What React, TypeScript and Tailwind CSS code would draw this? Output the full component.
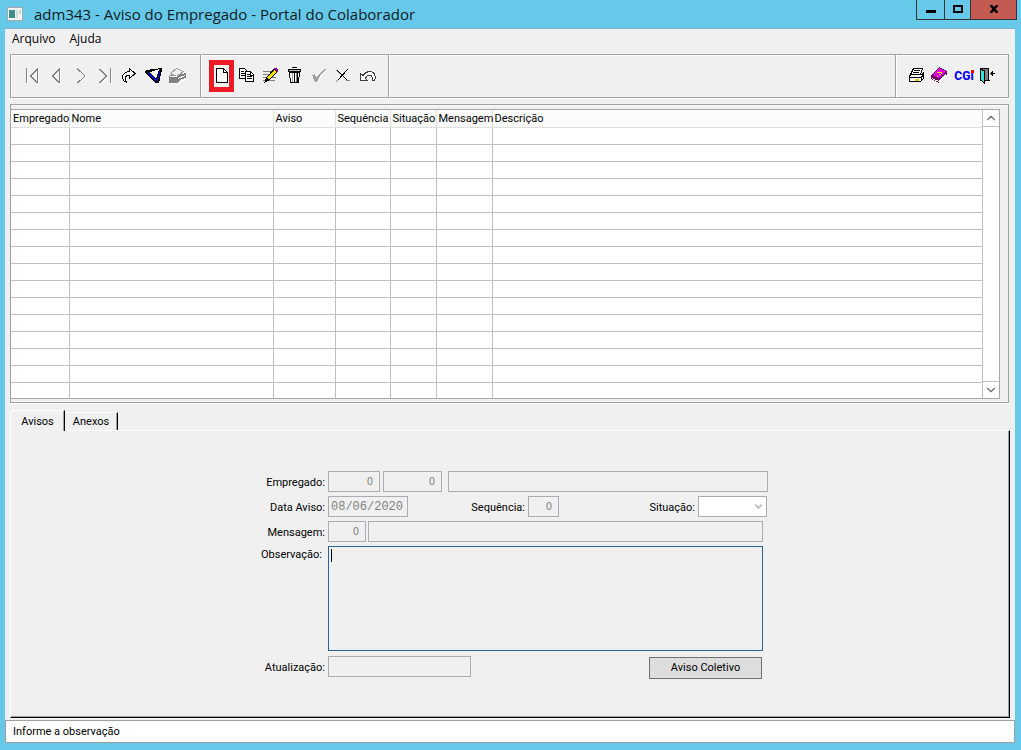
import React, { useState } from 'react';
import { ChevronDown, ChevronUp } from 'lucide-react';

interface Column {
    label: string;
    width: string;
}

const columns: Column[] = [
    { label: 'Empregado', width: 'w-[58px]' },
    { label: 'Nome', width: 'w-[204px]' },
    { label: 'Aviso', width: 'w-[62px]' },
    { label: 'Sequência', width: 'w-[55px]' },
    { label: 'Situação', width: 'w-[46px]' },
    { label: 'Mensagem', width: 'w-[56px]' },
    { label: 'Descrição', width: 'w-auto' },
];

const EMPTY_ROWS = 16;

interface ToolButtonProps {
    title: string;
    children: React.ReactNode;
}

const ToolButton: React.FC<ToolButtonProps> = ({ title, children }) => (
    <button type="button" title={title} aria-label={title} className="flex h-6 w-6 shrink-0 items-center justify-center">
        <svg viewBox="0 0 24 24" width="24" height="24" fill="none" shapeRendering="crispEdges">
            {children}
        </svg>
    </button>
);

const groupClass =
    'flex items-center border border-[#a0a0a0] border-l-white shadow-[inset_0_1px_0_#fff,0_1px_0_#fff]';

const Toolbar: React.FC = () => (
    <div className="mr-[6px] ml-[5px] flex h-11 border-l border-[#a0a0a0]">
        <div className={`${groupClass} w-[190px] shrink-0 pl-2`}>
            <ToolButton title="Primeiro">
                <path d="M7.5 5v15M11.5 12.5l6 6.5M18.5 5v15" stroke="#fff" />
                <path d="M6.5 4v15M17.5 4v15M17.5 5l-7 7 7 7" stroke="#808080" />
            </ToolButton>
            <ToolButton title="Anterior">
                <path d="M16.5 5v15" stroke="#fff" />
                <path d="M15.5 4v15M15.5 5l-7 7 7 7" stroke="#808080" />
            </ToolButton>
            <ToolButton title="Próximo">
                <path d="M10.5 20v-1l7-7" stroke="#fff" />
                <path d="M9.5 4v1l7.500 7-7.500 7" stroke="#808080" />
            </ToolButton>
            <ToolButton title="Último">
                <path d="M19.5 5v15M8.500 20l7-7" stroke="#fff" />
                <path d="M7.5 5l7 7-7 7M18.5 4v15" stroke="#808080" />
            </ToolButton>
            <ToolButton title="Ir para">
                <path
                    d="M13.5 4.500l5.500 5-5.500 5v-3C10 11 8 13 10.500 18.500 5 16 4.500 9 13.500 7.500z"
                    fill="#fff"
                    stroke="#000"
                />
            </ToolButton>
            <ToolButton title="Filtrar">
                <path d="M5 8l1-2 16-2v2l-3 13h-4z" fill="#000" />
                <path d="M8 9h2l6 7v2z" fill="#0000ff" />
                <path d="M10 8l9-3-3 10z" fill="#fff" />
                <path d="M19 7h1l-2 10h-1z" fill="#0000ff" />
            </ToolButton>
            <ToolButton title="Limpar filtro">
                <path d="M5 12l5-3 3 2 9-2v5l-5 1-3 4H5z" fill="#808080" />
                <path d="M6.500 9.500l6-5 7 3-7 5z" fill="#f0f0f0" stroke="#a0a0a0" />
                <path d="M6 12.500h7M14 14.500l7-3M6 19.500h8l4-3 4-1" stroke="#fff" />
            </ToolButton>
        </div>
        <div className={`${groupClass} w-[188px] shrink-0 pl-[7px]`}>
            <button
                type="button"
                title="Novo"
                aria-label="Novo"
                className="h-8 w-[25px] shrink-0 border-[5px] border-[#ed1c24]"
            >
                <svg viewBox="0 0 15 22" width="15" height="22" fill="none" shapeRendering="crispEdges">
                    <path d="M2.500 3.500h7l4 4v10h-11z" fill="#fff" stroke="#000" />
                    <path d="M9.500 3.500v4h4" stroke="#000" />
                </svg>
            </button>
            <ToolButton title="Copiar">
                <path d="M5.500 4.500h5l3 3v7h-8z" fill="#fff" stroke="#000" />
                <path d="M7 7.500h3M7 9.500h4M7 11.500h4" stroke="#000" />
                <path d="M11.500 7.500h5l3 3v7h-8z" fill="#fff" stroke="#000" />
                <path d="M13 10.500h3M13 12.500h5M13 14.500h5M16.500 8v3h3" stroke="#000" />
            </ToolButton>
            <ToolButton title="Alterar">
                <path d="M5 7.500h9M5 10.500h7M5 13.500h5M13 13.500h5M5 16.500h12" stroke="#808080" />
                <path d="M6 19l2-5 8-10h3l1 3-8 9z" fill="#000" />
                <path d="M9 14l7-8 2 2-7 8z" fill="#f0e000" />
                <path d="M16 4h3v1h1v3h-2l-2-2z" fill="#800080" />
            </ToolButton>
            <ToolButton title="Excluir">
                <path d="M10 3.500h5" stroke="#000" />
                <path d="M6.500 5.500h12v2h-12z" fill="#c0c0c0" stroke="#000" />
                <path d="M7.500 8.500h10l-1 10h-8z" fill="#fff" stroke="#000" />
                <path d="M10.500 9v9" stroke="#a0a0a0" />
                <path d="M12.500 9v9M15.500 9v9" stroke="#000" />
                <path d="M14.500 9v9" stroke="#808080" />
            </ToolButton>
            <ToolButton title="Confirmar">
                <path d="M7 13l3 5 2 1 1-3 8-10-8 7-2 3-2-4z" fill="#fff" />
                <path d="M6 11l3-1 1 4 5-6 4-3h1l-6 7-3 6H9z" fill="#a0a0a0" />
            </ToolButton>
            <ToolButton title="Cancelar">
                <path d="M7 6l11 11M18 5L7 17" stroke="#000" />
                <path d="M6 6l4 4M16 16l4 1M6 18l2-2" stroke="#808080" />
            </ToolButton>
            <ToolButton title="Desfazer">
                <path
                    d="M6.500 9.500v7h7l-2-2c1-4 6-4 7-1v3h2c2-4 0-9-5-9-4 0-5 2-6.500 4z"
                    fill="#fff"
                    stroke="#404040"
                />
            </ToolButton>
        </div>
        <div className={`${groupClass} min-w-0 flex-1`} />
        <div className={`${groupClass} w-[113px] shrink-0 pl-[7px]`}>
            <ToolButton title="Imprimir">
                <path d="M9.500 4.500h9l-2 6h-10z" fill="#fff" stroke="#000" />
                <path d="M10 6.500h6M9 8.500h6" stroke="#000" />
                <path d="M5.500 11.500l2-1h11l1-2v6l-3 3h-11z" fill="#fff" stroke="#000" />
                <path d="M5 13.500h12l2-2M17.500 13v4" stroke="#000" />
                <path d="M11 15.500h4" stroke="#e0d000" strokeWidth="2" />
            </ToolButton>
            <ToolButton title="Ajuda">
                <path d="M3 12l8-9 8 4v3l-8 9-8-4z" fill="#700070" />
                <path d="M5 11l6-7 7 3-7 7z" fill="#e000e0" />
                <path d="M4 14l7 3 7-8v2l-7 7-7-3z" fill="#fff" />
                <path d="M9 8.500h4M13.500 8v2M11 10.500h2M9 12.500h1" stroke="#ffe000" />
            </ToolButton>
            <button
                type="button"
                className="relative flex h-6 w-6 shrink-0 items-center justify-center text-[12px] leading-6 font-extrabold text-[#0000ff]"
            >
                CGi
                <span className="absolute top-[6px] right-[2px] h-[3px] w-[3px] bg-[#ff0000]" />
            </button>
            <ToolButton title="Sair">
                <path d="M4 4.500h9M12.500 4v12M4.500 4v12M4 16.500h10" stroke="#000" />
                <path d="M7 5h5v11H7z" fill="#808080" />
                <path d="M4.500 5l4 2v12l-4-3z" fill="#30e0e0" stroke="#000" />
                <path d="M14 9.500h5M15.500 8v3M16.500 7v5" stroke="#000" />
            </ToolButton>
        </div>
    </div>
);

const AvisosGrid: React.FC = () => (
    <div className="mt-1.5 mr-[6px] ml-[5px] border border-[#a0a0a0] bg-[#f0f0f0] pt-1 pb-[3px] shadow-[inset_0_1px_0_#fff,0_1px_0_#fff]">
        <div className="mr-2 flex h-[290px] overflow-hidden border border-l-0 border-[#a8a8ac] bg-white">
            <table className="w-full flex-1 table-fixed border-collapse self-start">
                <thead>
                    <tr className="h-[17px]">
                        {columns.map((column) => (
                            <th
                                key={column.label}
                                className={`${column.width} h-[17px] border-r border-b border-[#e0e0e0] bg-[#fcfcfc] p-0 pt-0.5 pl-0.5 text-left leading-[14px] font-normal whitespace-nowrap last:border-r-0`}
                            >
                                {column.label}
                            </th>
                        ))}
                    </tr>
                </thead>
                <tbody>
                    {Array.from({ length: EMPTY_ROWS }, (_, row) => (
                        <tr key={row} className="h-[17px]">
                            {columns.map((column) => (
                                <td
                                    key={column.label}
                                    className="h-[17px] border-r border-b border-[#c0c0c0] p-0 last:border-r-0"
                                />
                            ))}
                        </tr>
                    ))}
                </tbody>
            </table>
            <div className="flex w-[17px] shrink-0 flex-col justify-between border-l border-[#c0c0c0] text-[#707070]">
                <button type="button" aria-label="Rolar para cima" className="flex h-[17px] items-center justify-center border-b border-[#c0c0c0]">
                    <ChevronUp size={14} />
                </button>
                <button type="button" aria-label="Rolar para baixo" className="flex h-[17px] items-center justify-center border-t border-[#c0c0c0]">
                    <ChevronDown size={14} />
                </button>
            </div>
        </div>
    </div>
);

const fieldClass =
    'h-[21px] shrink-0 border border-[#abadb3] bg-[#f0f0f0] text-[#808080] outline-none';
const numberClass = "pr-1.5 text-right font-['DejaVu_Sans',sans-serif] text-[10px]";
const labelClass = 'mr-[3px] pt-0.5 text-right';

const AvisoForm: React.FC = () => {
    const [observacao, setObservacao] = useState('');

    return (
        <form className="mx-auto flex w-[516px] flex-col gap-1 pt-10" onSubmit={(e) => e.preventDefault()}>
            <div className="flex items-center">
                <label htmlFor="empregado" className={`${labelClass} w-[73px]`}>
                    Empregado:
                </label>
                <input id="empregado" readOnly value="0" className={`${fieldClass} ${numberClass} mr-[3px] w-[52px]`} />
                <input aria-label="Contrato" readOnly value="0" className={`${fieldClass} ${numberClass} mr-1.5 w-[59px]`} />
                <input aria-label="Nome do empregado" readOnly className={`${fieldClass} w-[320px]`} />
            </div>
            <div className="flex items-center">
                <label htmlFor="data" className={`${labelClass} w-[73px]`}>
                    Data Aviso:
                </label>
                <input
                    id="data"
                    readOnly
                    value="08/06/2020"
                    className={`${fieldClass} w-20 pl-0.5 font-['Liberation_Mono',monospace] text-[12px]`}
                />
                <label htmlFor="sequencia" className={`${labelClass} w-[117px]`}>
                    Sequência:
                </label>
                <input id="sequencia" readOnly value="0" className={`${fieldClass} ${numberClass} w-[31px]`} />
                <label htmlFor="situacao" className={`${labelClass} w-[136px]`}>
                    Situação:
                </label>
                <div className="relative h-[21px] w-[69px]">
                    <select id="situacao" className="block h-[21px] w-full appearance-none border border-[#abadb3] bg-white outline-none">
                        <option value="" />
                    </select>
                    <ChevronDown size={11} strokeWidth={4} className="pointer-events-none absolute top-[5px] right-[3px] text-[#bcbcbc]" />
                </div>
            </div>
            <div className="flex items-center">
                <label htmlFor="mensagem" className={`${labelClass} w-[73px]`}>
                    Mensagem:
                </label>
                <input id="mensagem" readOnly value="0" className={`${fieldClass} ${numberClass} mr-0.5 w-[38px]`} />
                <input aria-label="Texto da mensagem" readOnly className={`${fieldClass} w-[395px]`} />
            </div>
            <div className="flex">
                <label htmlFor="observacao" className={`${labelClass} w-[73px] pr-[3px]`}>
                    Observação:
                </label>
                <div className="relative">
                    <textarea
                        id="observacao"
                        value={observacao}
                        onChange={(e) => setObservacao(e.target.value)}
                        className="block h-[105px] w-[435px] resize-none border border-[#26659b] bg-[#f0f0f0] p-0.5 outline-none"
                    />
                    {observacao === '' && <span className="absolute top-[3px] left-[3px] h-[13px] w-px bg-black" />}
                </div>
            </div>
            <div className="flex items-end">
                <label htmlFor="atualizacao" className={`${labelClass} w-[73px] self-center`}>
                    Atualização:
                </label>
                <input id="atualizacao" readOnly className={`${fieldClass} mb-0.5 w-[143px]`} />
                <button type="button" className="mt-0.5 mr-1.5 ml-auto h-[22px] w-[113px] border border-[#707070] bg-[#dddddd]">
                    Aviso Coletivo
                </button>
            </div>
        </form>
    );
};

const App: React.FC = () => {
    const [tab, setTab] = useState('avisos');

    return (
        <div className="flex min-h-screen flex-col bg-[#66c9ea] pr-1.5 pb-[7px] pl-[5px] font-[Roboto,'Liberation_Sans',sans-serif] text-[11px] leading-[14px] text-black">
            <header className="flex h-7 shrink-0 items-center">
                <svg viewBox="0 0 16 14" width="16" height="14" className="ml-0.5 shrink-0">
                    <rect x="0.5" y="0.5" width="15" height="13" fill="#f4f4f4" stroke="#a4a8aa" />
                    <rect x="2" y="3" width="6" height="8" fill="#3e8f85" />
                    <rect x="9" y="3" width="2" height="8" fill="#d4dcdc" />
                    <rect x="12" y="3" width="2" height="4" fill="#b9dcc9" />
                </svg>
                <h1 className="ml-[11px] font-['Open_Sans',sans-serif] text-[15px] leading-5 whitespace-nowrap text-[#101c22]">
                    adm343 - Aviso do Empregado - Portal do Colaborador
                </h1>
                <div className="-mr-0.5 ml-auto flex h-5 self-start">
                    <button type="button" aria-label="Minimizar" className="flex w-[29px] justify-center border border-t-0 border-[#333]">
                        <span className="mt-2.5 h-[3px] w-2.5 bg-black" />
                    </button>
                    <button type="button" aria-label="Maximizar" className="flex w-[25px] justify-center border-b border-[#333]">
                        <span className="mt-[5px] h-2 w-2.5 border-2 border-black" />
                    </button>
                    <button type="button" aria-label="Fechar" className="flex w-[47px] justify-center border border-t-0 border-[#333] bg-[#c35b52]">
                        <svg viewBox="0 0 10 8" width="10" height="8" className="mt-[5px]">
                            <path d="M1.500 0L8.500 8M8.500 0L1.500 8" stroke="#000" strokeWidth="2.500" />
                        </svg>
                    </button>
                </div>
            </header>

            <main className="flex flex-1 flex-col bg-[#f0f0f0]">
                <nav className="flex h-[26px] shrink-0 gap-3.5 border-t border-[#7fb0cc] pt-0.5 pl-[7px] font-['Open_Sans',sans-serif] text-[12px] leading-4">
                    <button type="button" className="h-4">Arquivo</button>
                    <button type="button" className="h-4">Ajuda</button>
                </nav>
                <Toolbar />
                <AvisosGrid />

                <div className="mt-[7px] ml-[5px] flex h-5 shrink-0 items-end" role="tablist">
                    <button
                        type="button"
                        role="tab"
                        aria-selected={tab === 'avisos'}
                        onClick={() => setTab('avisos')}
                        className="z-10 -mb-px h-[21px] w-[55px] rounded-tl-sm border-t border-r border-l border-white border-r-black bg-[#f0f0f0] pt-px shadow-[inset_-1px_0_0_#a0a0a0]"
                    >
                        Avisos
                    </button>
                    <button
                        type="button"
                        role="tab"
                        aria-selected={tab === 'anexos'}
                        onClick={() => setTab('anexos')}
                        className="h-[18px] w-[53px] border-t border-r border-white border-r-black pt-px shadow-[inset_-1px_0_0_#a0a0a0]"
                    >
                        Anexos
                    </button>
                </div>
                <section className="mx-[5px] flex-1 border border-t-white border-r-black border-b-black border-l-white pb-8 shadow-[inset_-1px_-1px_0_#a0a0a0]">
                    {tab === 'avisos' && <AvisoForm />}
                </section>

                <footer className="mt-0.5 h-[23px] shrink-0 border border-[#a0a0a0] bg-white pl-[7px] leading-[22px]">
                    Informe a observação
                </footer>
            </main>
        </div>
    );
};

export default App;
